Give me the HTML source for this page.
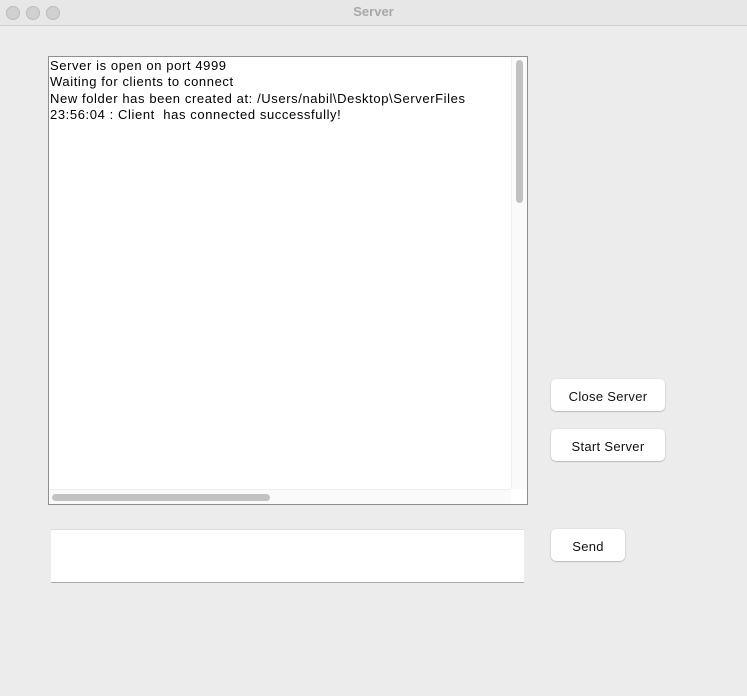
<!DOCTYPE html>
<html><head><style>
body{margin:0;width:747px;height:696px;background:#ececec;font-family:"Liberation Sans",sans-serif;position:relative;overflow:hidden}
.title{position:absolute;left:0;top:0;width:747px;height:25px;background:#e7e7e7;border-bottom:1px solid #cfcfcf;text-align:center;line-height:23px;font-size:13px;font-weight:bold;color:#a8a8a8}
.dot{position:absolute;top:6px;width:12px;height:12px;border-radius:50%;background:#d0d0d0;border:0.5px solid #bcbcbc}
.ta{position:absolute;left:48px;top:56px;width:478px;height:447px;background:#fff;border:1px solid #8e8e8e}
.txt{position:absolute;left:1px;top:1px;font-size:13px;line-height:16.3px;letter-spacing:0.6px;color:#000;white-space:pre}
.vs{position:absolute;right:0;top:0;width:15px;height:432px;background:#fafafa;border-left:1px solid #eee}
.vt{position:absolute;left:4px;top:3px;width:7px;height:143px;border-radius:4px;background:#c2c2c2}
.hs{position:absolute;left:0;bottom:0;width:462px;height:14px;background:#fafafa;border-top:1px solid #eee}
.ht{position:absolute;left:3px;top:4px;width:218px;height:7px;border-radius:4px;background:#c2c2c2}
.in{position:absolute;left:51px;top:529px;width:473px;height:52px;background:#fff;border-bottom:1px solid #aaa;border-top:1px solid #ddd}
.btn{position:absolute;background:#fff;border-radius:5px;box-shadow:0 0.5px 1.5px rgba(0,0,0,.35);font-size:13px;text-align:center;color:#111;letter-spacing:0.3px}
</style></head><body>
<div class="title">Server</div>
<div class="dot" style="left:6px"></div><div class="dot" style="left:26px"></div><div class="dot" style="left:46px"></div>
<div class="ta"><div class="txt">Server is open on port 4999
Waiting for clients to connect
New folder has been created at: /Users/nabil\Desktop\ServerFiles
23:56:04 : Client  has connected successfully!</div>
<div class="vs"><div class="vt"></div></div>
<div class="hs"><div class="ht"></div></div></div>
<div class="in"></div>
<div class="btn" style="left:551px;top:379px;width:114px;height:32px;line-height:35px">Close Server</div>
<div class="btn" style="left:551px;top:429px;width:114px;height:32px;line-height:35px">Start Server</div>
<div class="btn" style="left:551px;top:529px;width:74px;height:32px;line-height:35px">Send</div>
</body></html>
